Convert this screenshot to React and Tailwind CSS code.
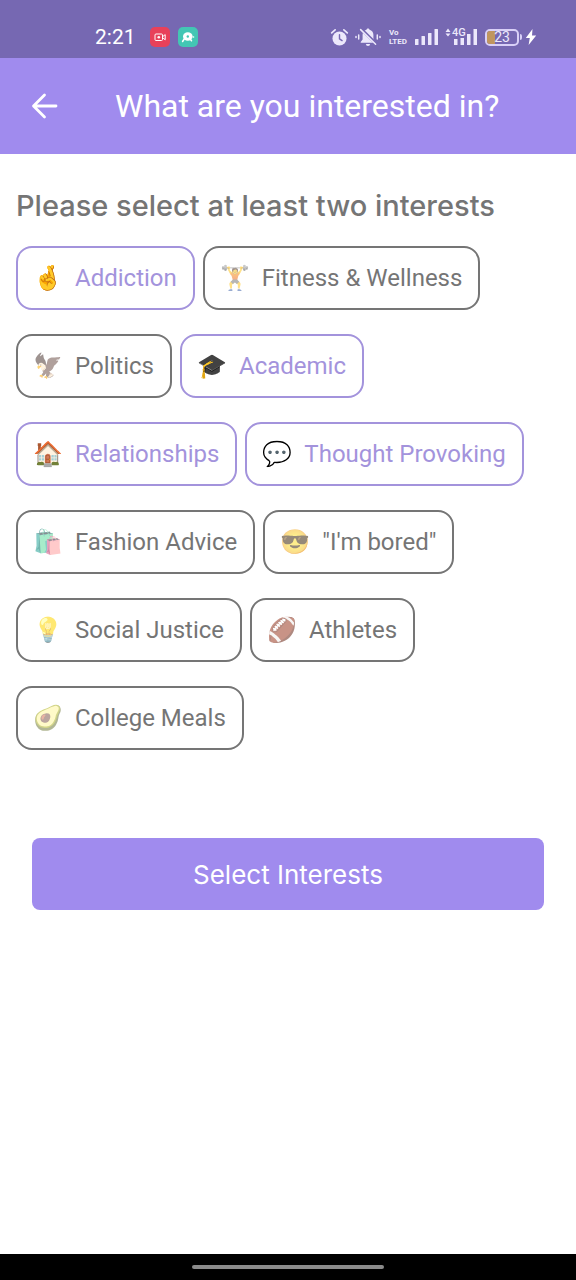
import { useState } from "react";

const INTERESTS = [
  { emoji: "🤞", label: "Addiction", selected: true },
  { emoji: "🏋️", label: "Fitness & Wellness", selected: false },
  { emoji: "🦅", label: "Politics", selected: false },
  { emoji: "🎓", label: "Academic", selected: true },
  { emoji: "🏠", label: "Relationships", selected: true },
  { emoji: "💬", label: "Thought Provoking", selected: true },
  { emoji: "🛍️", label: "Fashion Advice", selected: false },
  { emoji: "😎", label: "\"I'm bored\"", selected: false },
  { emoji: "💡", label: "Social Justice", selected: false },
  { emoji: "🏈", label: "Athletes", selected: false },
  { emoji: "🥑", label: "College Meals", selected: false },
];

function RecorderIcon() {
  return (
    <svg viewBox="0 0 20 20" className="size-5" aria-hidden="true">
      <rect width="20" height="20" rx="5" fill="#e8415a" />
      <rect x="5" y="7" width="7.5" height="6.5" rx="1" fill="none" stroke="#fff" strokeWidth="1" />
      <circle cx="8.8" cy="10.2" r="1.3" fill="#fff" />
      <path d="M13 9.400 15.200 7.600v5.200L13 11" fill="none" stroke="#fff" strokeWidth="1" />
    </svg>
  );
}

function ChatIcon() {
  return (
    <svg viewBox="0 0 20 20" className="size-5" aria-hidden="true">
      <rect width="20" height="20" rx="5" fill="#43c6b4" />
      <ellipse cx="9.800" cy="9.500" rx="4.800" ry="4.200" fill="#fff" />
      <path d="M6.500 11.500 4.600 14.500M12.500 12.500l1 1.300" stroke="#fff" strokeWidth="1.500" strokeLinecap="round" />
      <circle cx="15.500" cy="10" r=".8" fill="#fff" />
      <circle cx="9.800" cy="9.500" r="1.200" fill="#43c6b4" />
    </svg>
  );
}

function AlarmIcon() {
  return (
    <svg viewBox="0 0 20 20" className="size-[19px]" fill="none" aria-hidden="true">
      <circle cx="10" cy="11" r="7.4" fill="#ece8fb" />
      <path d="M1.8 5.2 5.4 2M18.2 5.2 14.6 2" stroke="#ece8fb" strokeWidth="1.8" strokeLinecap="round" />
      <path d="M10 7v4.4l2.7 1.8" stroke="#7668b2" strokeWidth="1.5" strokeLinecap="round" />
    </svg>
  );
}

function MutedBellIcon() {
  return (
    <svg viewBox="0 0 26 20" className="h-5 w-[26px]" fill="none" aria-hidden="true">
      <path d="M13 1.4c.9 0 1.5.6 1.5 1.4 2.4.7 3.9 2.600 3.900 5v4.600l1.900 2.600v.8H5.700v-.8l1.900-2.600V7.800c0-2.400 1.500-4.300 3.900-5 0-.8.600-1.400 1.500-1.400Z" fill="#ece8fb" />
      <path d="M10.900 16.900h4.200a2.100 2.100 0 0 1-4.200 0Z" fill="#ece8fb" />
      <path d="m6.500 2.400 14.700 14.400" stroke="#7668b2" strokeWidth="3" />
      <path d="m5.600 2.600 15 14.700" stroke="#ece8fb" strokeWidth="1.500" strokeLinecap="round" />
      <path d="M3.700 8v4M22.300 8v4M1 9.500v1M25 9.500v1" stroke="#ece8fb" strokeWidth="1.500" strokeLinecap="round" />
    </svg>
  );
}

function SignalIcon() {
  return (
    <svg viewBox="0 0 24 18" className="h-[18px] w-6" fill="#ece8fb" aria-hidden="true">
      <rect x="0" y="11" width="3.500" height="6" rx=".5" />
      <rect x="6.500" y="8" width="3.500" height="9" rx=".5" />
      <rect x="13" y="5" width="3.500" height="12" rx=".5" />
      <rect x="19.500" y="1" width="3.500" height="16" rx=".5" />
    </svg>
  );
}

function DataSignalIcon() {
  return (
    <div className="relative h-5 w-8">
      <svg viewBox="0 0 32 20" className="h-5 w-8" fill="#ece8fb" aria-hidden="true">
        <path d="M3 1.500 5.500 5H.5ZM3 9.500.5 6.500h5Z" />
        <rect x="9" y="12" width="3.500" height="6" />
        <rect x="15.500" y="11" width="3.500" height="7" />
        <rect x="22" y="7" width="3.500" height="11" />
        <rect x="28.500" y="2" width="3.500" height="16" />
      </svg>
      <span className="absolute top-0 left-[7px] text-[11px] leading-[11px] font-medium">4G</span>
    </div>
  );
}

function Battery() {
  return (
    <div className="flex items-center gap-px">
      <div className="relative flex h-[17px] w-[34px] items-center justify-center overflow-hidden rounded-[5px] border-2 border-[#d9d0f7]">
        <div className="absolute inset-y-0 left-0 w-2 bg-[#c0965f]" />
        <span className="relative text-[14px] leading-3">23</span>
      </div>
      <div className="h-1.5 w-0.5 rounded-r bg-[#d9d0f7]" />
      <svg viewBox="0 0 12 18" className="ml-0.5 h-[18px] w-3" fill="#fff" aria-hidden="true">
        <path d="M7.500 1 .8 10h4L3.600 17 11.200 7.500H7Z" />
      </svg>
    </div>
  );
}

function StatusBar() {
  return (
    <div className="flex h-[58px] items-center bg-[#7668b2] pt-4 pr-[39px] pl-[95px] text-[#ece8fb]">
      <span className="text-[21px] leading-6 text-white">2:21</span>
      <div className="ml-3.5 flex gap-2">
        <RecorderIcon />
        <ChatIcon />
      </div>
      <div className="ml-auto flex items-center gap-2">
        <div className="flex items-center gap-1.5">
          <AlarmIcon />
          <MutedBellIcon />
        </div>
        <div className="text-[8px] leading-[9px] font-bold">
          <div>Vo</div>
          <div>LTED</div>
        </div>
        <div className="flex items-center gap-1.5">
          <SignalIcon />
          <DataSignalIcon />
        </div>
        <Battery />
      </div>
    </div>
  );
}

function InterestChip({ emoji, label, selected, onToggle }) {
  return (
    <button
      type="button"
      aria-pressed={selected}
      onClick={onToggle}
      className={`flex h-16 items-center gap-3 rounded-2xl border-2 pr-4 pl-[15px] text-2xl ${
        selected ? "border-[#a393dc] text-[#a393dc]" : "border-[#757575] text-[#757575]"
      }`}
    >
      <span aria-hidden="true" className={`w-[30px] text-black ${selected ? "" : "opacity-55"}`}>
        {emoji}
      </span>
      <span>{label}</span>
    </button>
  );
}

export default function App() {
  const [interests, setInterests] = useState(INTERESTS);

  const toggle = (label) =>
    setInterests((items) =>
      items.map((item) => (item.label === label ? { ...item, selected: !item.selected } : item))
    );

  return (
    <div className="flex min-h-screen flex-col bg-white font-['Roboto',sans-serif]">
      <StatusBar />
      <header className="flex h-24 items-center bg-[#a08bee] px-[27px] text-white">
        <button type="button" aria-label="Back" className="flex size-9 items-center justify-center">
          <svg viewBox="0 0 32 32" className="size-8" fill="none" stroke="currentColor" strokeWidth="2.800" strokeLinecap="round" strokeLinejoin="round" aria-hidden="true">
            <path d="M27 16H5M15.500 5 4.500 16l11 11" />
          </svg>
        </button>
        <h1 className="ml-[52px] text-[32px] leading-10">What are you interested in?</h1>
      </header>

      <main className="flex-1 px-4 pt-8">
        <h2 className="text-[29px] leading-10 font-medium text-[#757575] font-['Inter',sans-serif]">
          Please select at least two interests
        </h2>
        <div className="mt-5 flex flex-wrap gap-x-2 gap-y-6">
          {interests.map((item) => (
            <InterestChip key={item.label} {...item} onToggle={() => toggle(item.label)} />
          ))}
        </div>
        <div className="mt-22 px-4">
          <button
            type="button"
            className="h-18 w-full rounded-lg bg-[#a08bee] text-[26px] text-white font-['Inter',sans-serif]"
          >
            Select Interests
          </button>
        </div>
      </main>

      <footer className="flex h-[26px] items-center justify-center bg-black">
        <div className="h-1 w-1/3 rounded-full bg-[#8a8a8a]" />
      </footer>
    </div>
  );
}
